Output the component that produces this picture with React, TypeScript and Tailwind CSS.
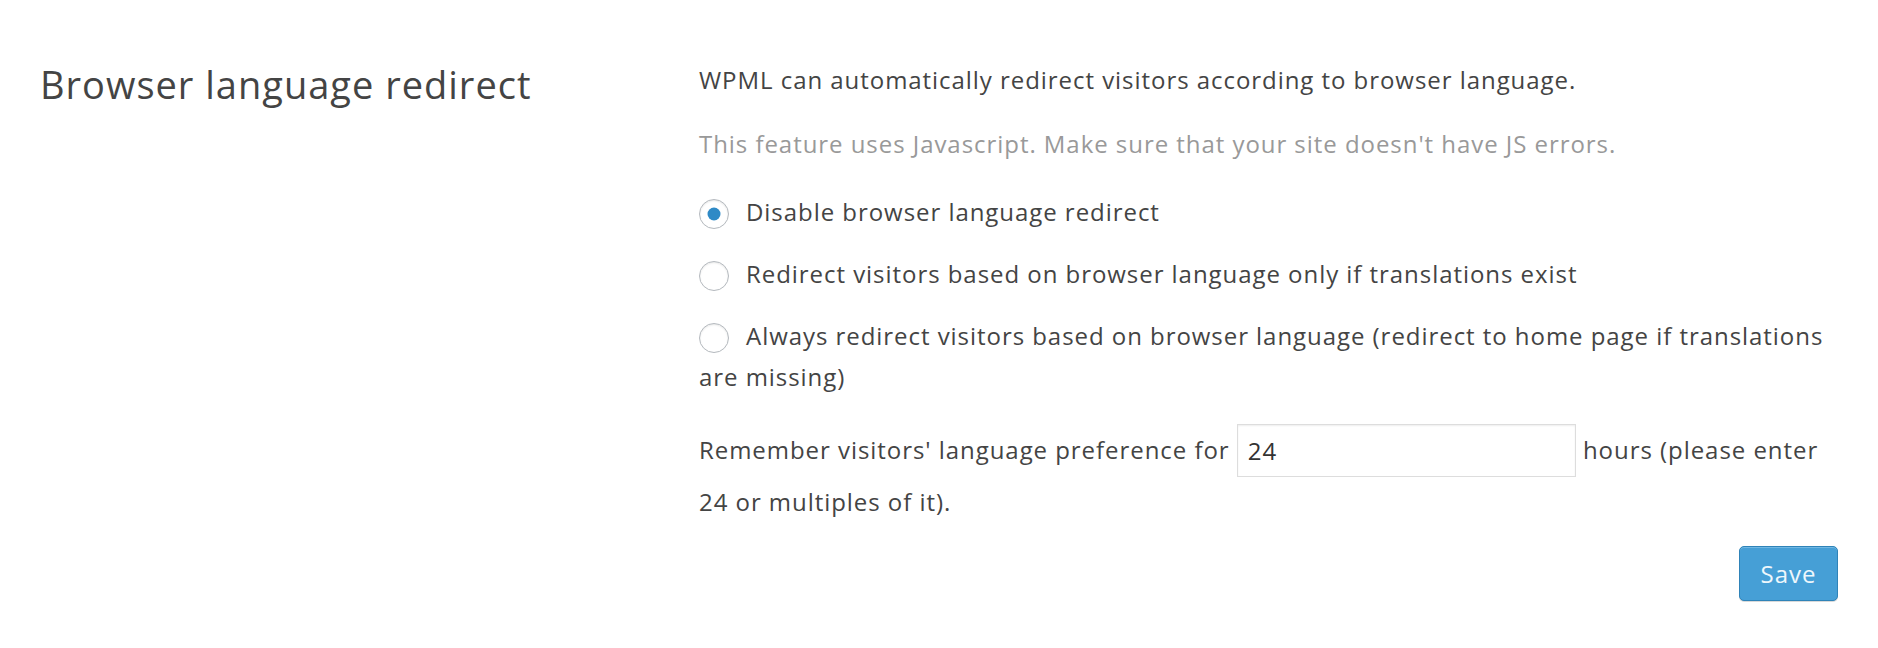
import { useState } from 'react';

const OPTIONS = [
  { id: 'disable', label: 'Disable browser language redirect' },
  { id: 'exists', label: 'Redirect visitors based on browser language only if translations exist' },
  {
    id: 'always',
    label: 'Always redirect visitors based on browser language (redirect to home page if translations are missing)',
  },
];

function Radio({ checked }: { checked: boolean }) {
  return (
    <span className="relative mr-[17px] inline-block h-[30px] w-[30px] rounded-full border border-[#b4b9be] bg-white align-[-8px] shadow-[inset_0_1px_2px_rgba(0,0,0,0.1)]">
      {checked && (
        <span className="absolute left-1/2 top-1/2 h-[13px] w-[13px] -translate-x-1/2 -translate-y-1/2 rounded-full bg-[#2f8ac6]" />
      )}
    </span>
  );
}

export default function App() {
  const [mode, setMode] = useState('disable');
  const [hours, setHours] = useState('24');

  return (
    <div className="min-h-[648px] bg-white font-['Open_Sans',sans-serif] text-[#444]">
      <div className="flex px-[40px] pt-[59px]">
        <h2 className="mt-[3px] w-[659px] shrink-0 text-[38px] leading-[44px] font-normal tracking-[1px] text-[#444]">
          Browser language redirect
        </h2>

        <div className="flex-1 text-[24px] leading-[41px] tracking-[0.95px]">
          <p>WPML can automatically redirect visitors according to browser language.</p>
          <p className="mt-[23px] text-[#999]">This feature uses Javascript. Make sure that your site doesn't have JS errors.</p>

          <ul className="mt-[27px] flex flex-col gap-[21px]">
            {OPTIONS.map((o) => (
              <li key={o.id} onClick={() => setMode(o.id)} className="cursor-pointer">
                <Radio checked={mode === o.id} />
                {o.label}
              </li>
            ))}
          </ul>

          <p className="mt-[29px] leading-[46px]">
            Remember visitors' language preference for{' '}
            <input
              value={hours}
              onChange={(e) => setHours(e.target.value)}
              className="relative -top-[2px] h-[53px] w-[339px] border border-[#ddd] px-[10px] align-middle text-[24px] tracking-[0.95px] text-[#333] shadow-[inset_0_1px_2px_rgba(0,0,0,0.07)] outline-none"
            />{' '}
            hours (please enter 24 or multiples of it).
          </p>

          <div className="mt-[21px] flex justify-end">
            <button className="h-[55px] w-[99px] rounded-[5px] border border-[#2f83b8] bg-[#469fd6] text-[24px] text-[#eef7fc] shadow-[inset_0_1px_0_rgba(140,200,235,0.6),0_1px_0_rgba(0,0,0,0.15)]">
              Save
            </button>
          </div>
        </div>
      </div>
    </div>
  );
}
